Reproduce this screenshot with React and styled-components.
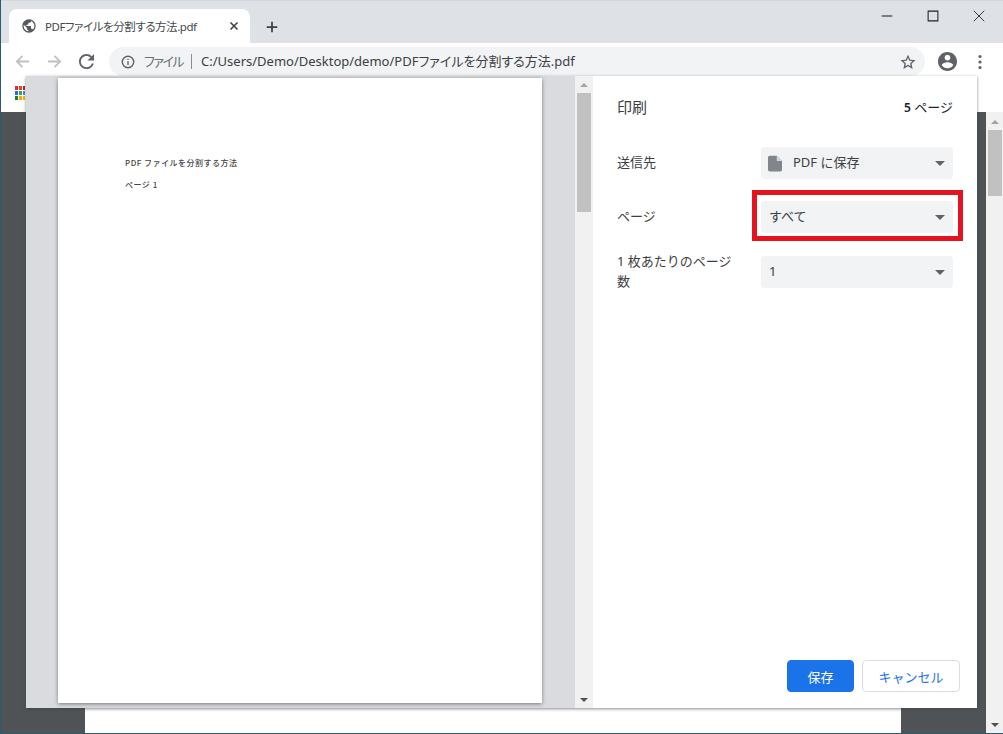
import React from 'react';
import styled, { createGlobalStyle } from 'styled-components';

const Global = createGlobalStyle`
html, body { margin: 0; padding: 0; height: 100%; overflow: hidden; }
body { font-family: "Noto Sans", "Noto Sans CJK JP", sans-serif; background: #fff; }
`;

const Win = styled.div`
position: relative;
width: 1003px;
height: 734px;
box-sizing: border-box;
border-left: 1px solid #2c5a6e;
border-bottom: 1px solid #2c5a6e;
display: flex;
flex-direction: column;
overflow: hidden;
`;

const TabStrip = styled.div`
height: 43px;
flex: none;
box-sizing: border-box;
background: #dee1e6;
border-top: 1px solid #d3d6da;
display: flex;
align-items: flex-end;
padding-left: 8px;
`;

const Tab = styled.div`
width: 241px;
height: 34px;
background: #fff;
border-radius: 8px 8px 0 0;
display: flex;
align-items: center;
padding-left: 12px;
box-sizing: border-box;
`;

const TabTitle = styled.span`
font-size: 11.5px;
font-feature-settings: "palt";
letter-spacing: -0.45px;
color: #45484c;
margin-left: 8px;
width: 182px;
white-space: nowrap;
padding-bottom: 1px;
`;

const NewTab = styled.div`
margin: 0 0 9px 15px;
display: flex;
`;

const WinButtons = styled.div`
margin-left: auto;
margin-right: 1px;
align-self: flex-start;
display: flex;
`;

const WinButton = styled.div`
width: 46px;
height: 30px;
display: flex;
align-items: center;
justify-content: center;
`;

const Toolbar = styled.div`
height: 33px;
flex: none;
background: #fff;
display: flex;
align-items: center;
padding: 4px 0 0 12px;
box-sizing: border-box;
`;

const NavIcon = styled.div`
width: 32px;
display: flex;
padding-left: 2px;
box-sizing: border-box;
`;

const AddressBar = styled.div`
width: 816px;
height: 29px;
background: #f1f3f4;
border-radius: 15px;
display: flex;
align-items: center;
padding: 0 9px 0 12px;
box-sizing: border-box;
font-size: 13px;
color: #3c4043;
`;

const Secure = styled.span`
color: #6c6f73;
margin-left: 9px;
font-size: 13px;
font-feature-settings: "palt";
letter-spacing: -1.5px;
padding-bottom: 2px;
`;

const Divider = styled.span`
width: 1px;
height: 15px;
background: #8a8d91;
margin: 0 9px 0 8px;
`;

const Url = styled.span`
font-size: 13px;
font-feature-settings: "palt";
white-space: nowrap;
flex: 1;
padding-bottom: 2px;
`;

const ToolIcons = styled.div`
display: flex;
align-items: center;
margin-left: 13px;
gap: 21px;
`;

const BookmarkBar = styled.div`
height: 36px;
flex: none;
background: #fff;
padding: 10px 0 0 14px;
box-sizing: border-box;
`;

const Content = styled.div`
flex: 1;
background: #505356;
display: flex;
padding-left: 84px;
`;

const BackPage = styled.div`
width: 816px;
background: #fff;
`;

const BackScroll = styled.div`
width: 17px;
margin-left: auto;
background: #f1f1f1;
display: flex;
flex-direction: column;
align-items: center;
padding-top: 1px;
box-sizing: border-box;
`;

const Dialog = styled.div`
position: absolute;
left: 25px;
top: 76px;
width: 951px;
height: 632px;
display: flex;
background: #fff;
box-shadow: 0 1px 3px rgba(60, 64, 67, 0.6);
`;

const Preview = styled.div`
width: 549px;
flex: none;
background: #dadbdf;
padding: 2px 0 0 32px;
box-sizing: border-box;
`;

const Sheet = styled.div`
width: 484px;
height: 625px;
background: #fff;
box-shadow: 0 1px 4px rgba(0, 0, 0, 0.45);
padding: 79px 0 0 67px;
box-sizing: border-box;
font-family: "Noto Sans CJK JP", sans-serif;
`;

const SheetLine = styled.div`
font-size: 8px;
font-weight: 500;
line-height: 12px;
color: #444;
margin-bottom: 10px;
letter-spacing: 0.5px;
white-space: nowrap;
`;

const Bar = styled.div`
width: 18px;
flex: none;
background: #f1f1f1;
display: flex;
flex-direction: column;
align-items: center;
`;

const Thumb = styled.div`
width: 14px;
height: ${p => p.$h}px;
background: #c1c1c1;
margin-top: 6px;
`;

const ArrowUp = styled.div`
margin-top: 7px;
width: 0;
height: 0;
border-left: 4px solid transparent;
border-right: 4px solid transparent;
border-bottom: 4px solid #a3a3a3;
`;

const ArrowDown = styled.div`
margin: auto 0 6px;
width: 0;
height: 0;
border-left: 4px solid transparent;
border-right: 4px solid transparent;
border-top: 4px solid #505050;
`;

const Side = styled.div`
flex: 1;
display: flex;
flex-direction: column;
padding: 19px 17px 16px 24px;
box-sizing: border-box;
color: #3c4043;
`;

const Head = styled.div`
display: flex;
justify-content: space-between;
align-items: center;
height: 22px;
padding-right: 7px;
margin-bottom: 30px;
`;

const Title = styled.div`
font-size: 15px;
color: #3c4043;
`;

const Count = styled.div`
font-size: 13px;
color: #202124;
`;

const CountNum = styled.span`
font-size: 12px;
font-weight: 600;
`;

const Row = styled.div`
display: grid;
grid-template-columns: 144px 192px;
align-items: center;
margin-bottom: ${p => p.$gap}px;
`;

const Label = styled.div`
font-size: 13px;
line-height: 20px;
padding-bottom: 2px;
color: #3c4043;
width: 120px;
`;

const Select = styled.div`
position: relative;
height: 32px;
background: #f1f3f4;
border-radius: 4px;
display: flex;
align-items: center;
padding: 0 9px 0 8px;
font-size: 13px;
color: #3c4043;
`;

const SelectText = styled.span`
padding-bottom: 3px;
`;

const DocIcon = styled.svg`
margin: 0 11px 0 -1px;
flex: none;
`;

const Caret = styled.div`
margin-left: auto;
width: 0;
height: 0;
border-left: 5px solid transparent;
border-right: 5px solid transparent;
border-top: 5px solid #5f6368;
margin-right: -1px;
`;

const Mark = styled.div`
position: absolute;
left: -9px;
top: -11px;
width: 211px;
height: 51px;
box-sizing: border-box;
border: 5px solid #e3141f;
`;

const Actions = styled.div`
margin-top: auto;
display: flex;
justify-content: flex-end;
gap: 8px;
`;

const Button = styled.div`
height: 32px;
box-sizing: border-box;
border-radius: 4px;
display: flex;
align-items: center;
justify-content: center;
font-size: 13px;
width: ${p => p.$w}px;
background: ${p => (p.$primary ? '#1a73e8' : '#fff')};
color: ${p => (p.$primary ? '#fff' : '#1a73e8')};
border: 1px solid ${p => (p.$primary ? '#1a73e8' : '#dadce0')};
`;

const Stroke = ({ d, color = '#5f6368', width = 2, size = 16 }) => (
    <svg width={size} height={size} viewBox="0 0 16 16" fill="none" stroke={color} strokeWidth={width}>
        <path d={d} />
    </svg>
);

const Apps = () => {
    const colors = ['#d93025', '#ea4335', '#c5221f', '#1a73e8', '#34a853', '#4285f4', '#188038', '#f9ab00', '#fbbc04'];
    return (
        <svg width="10" height="14" viewBox="0 0 10 14" style={{ display: 'block' }}>
            {colors.map((c, i) => (
                <rect key={i} x={(i % 3) * 4} y={Math.floor(i / 3) * 5} width="3" height="4" fill={c} />
            ))}
        </svg>
    );
};

const App = () => (
    <>
        <Global />
        <Win>
            <TabStrip>
                <Tab>
                    <svg width="16" height="16" viewBox="0 0 24 24" fill="#55585c">
                        <path d="M12 2C6.48 2 2 6.48 2 12s4.48 10 10 10 10-4.48 10-10S17.52 2 12 2zm-1 17.93c-3.95-.49-7-3.85-7-7.93 0-.62.08-1.21.21-1.79L9 15v1c0 1.1.9 2 2 2v1.93zm6.9-2.54c-.26-.81-1-1.39-1.9-1.39h-1v-3c0-.55-.45-1-1-1H8v-2h2c.55 0 1-.45 1-1V7h2c1.1 0 2-.9 2-2v-.41c2.93 1.19 5 4.06 5 7.41 0 2.08-.8 3.97-2.1 5.39z" />
                    </svg>
                    <TabTitle>PDFファイルを分割する方法.pdf</TabTitle>
                    <Stroke size={14} color="#45484c" width={2} d="M4 4l8 8M12 4l-8 8" />
                </Tab>
                <NewTab>
                    <Stroke size={14} color="#3c4043" width={2} d="M8 2v12M2 8h12" />
                </NewTab>
                <WinButtons>
                    <WinButton><Stroke size={12} color="#222" width={1.4} d="M1 8h14" /></WinButton>
                    <WinButton><Stroke size={12} color="#222" width={1.4} d="M1.5 1.5h13v13h-13z" /></WinButton>
                    <WinButton><Stroke size={14} color="#222" width={1} d="M2 2l12 12M14 2L2 14" /></WinButton>
                </WinButtons>
            </TabStrip>
            <Toolbar>
                <NavIcon><Stroke size={15} color="#c0c2c5" d="M15 8H2M8 2L2 8l6 6" /></NavIcon>
                <NavIcon><Stroke size={15} color="#c0c2c5" d="M1 8h13M8 2l6 6-6 6" /></NavIcon>
                <NavIcon>
                    <svg width="15" height="15" viewBox="4 4 16 16" fill="#5f6368">
                        <path d="M17.65 6.35A7.958 7.958 0 0 0 12 4c-4.42 0-7.99 3.58-7.99 8s3.57 8 7.99 8c3.73 0 6.84-2.55 7.73-6h-2.08A5.99 5.99 0 0 1 12 18c-3.31 0-6-2.69-6-6s2.69-6 6-6c1.66 0 3.14.69 4.22 1.78L13 11h7V4l-2.35 2.35z" />
                    </svg>
                </NavIcon>
                <AddressBar>
                    <svg width="14" height="14" viewBox="0 0 16 16" fill="none" stroke="#5f6368" strokeWidth="1.6">
                        <circle cx="8" cy="8" r="6.5" />
                        <path d="M8 7v4.5M8 4.2v1.6" />
                    </svg>
                    <Secure>ファイル</Secure>
                    <Divider />
                    <Url>C:/Users/Demo/Desktop/demo/PDFファイルを分割する方法.pdf</Url>
                    <svg width="16" height="16" viewBox="0 0 24 24" fill="none" stroke="#5f6368" strokeWidth="2">
                        <path d="M12 3.5l2.6 5.8 6.3.7-4.7 4.2 1.3 6.2L12 17.2l-5.5 3.2 1.3-6.2L3.1 10l6.3-.7z" />
                    </svg>
                </AddressBar>
                <ToolIcons>
                    <svg width="19" height="19" viewBox="2 2 20 20" fill="#5f6368">
                        <path d="M12 2C6.48 2 2 6.48 2 12s4.48 10 10 10 10-4.48 10-10S17.52 2 12 2zm0 3c1.66 0 3 1.34 3 3s-1.34 3-3 3-3-1.34-3-3 1.34-3 3-3zm0 14.2c-2.5 0-4.71-1.28-6-3.22.03-1.99 4-3.08 6-3.08 1.99 0 5.97 1.09 6 3.08-1.29 1.94-3.5 3.22-6 3.22z" />
                    </svg>
                    <svg width="4" height="16" viewBox="0 0 4 16" fill="#5f6368">
                        <circle cx="2" cy="2.5" r="1.6" />
                        <circle cx="2" cy="8" r="1.6" />
                        <circle cx="2" cy="13.5" r="1.6" />
                    </svg>
                </ToolIcons>
            </Toolbar>
            <BookmarkBar><Apps /></BookmarkBar>
            <Content>
                <BackPage />
                <BackScroll>
                    <ArrowUp />
                    <Thumb $h={66} />
                    <ArrowDown />
                </BackScroll>
            </Content>
            <Dialog>
                <Preview>
                    <Sheet>
                        <SheetLine>PDF ファイルを分割する方法</SheetLine>
                        <SheetLine>ページ 1</SheetLine>
                    </Sheet>
                </Preview>
                <Bar>
                    <ArrowUp />
                    <Thumb $h={119} />
                    <ArrowDown />
                </Bar>
                <Side>
                    <Head>
                        <Title>印刷</Title>
                        <Count><CountNum>5</CountNum> ページ</Count>
                    </Head>
                    <Row $gap={22}>
                        <Label>送信先</Label>
                        <Select>
                            <DocIcon width="14" height="17" viewBox="0 0 16 18" fill="#80868b">
                                <path d="M2 0h8l6 6v10.5a1.5 1.5 0 0 1-1.5 1.5h-12.5A2 2 0 0 1 0 16V2a2 2 0 0 1 2-2z" />
                                <path d="M10 0v6h6z" fill="#d5d7da" />
                            </DocIcon>
                            <SelectText>PDF に保存</SelectText>
                            <Caret />
                        </Select>
                    </Row>
                    <Row $gap={18}>
                        <Label>ページ</Label>
                        <Select>
                            <SelectText>すべて</SelectText>
                            <Caret />
                            <Mark />
                        </Select>
                    </Row>
                    <Row $gap={0}>
                        <Label>1 枚あたりのページ数</Label>
                        <Select>
                            <SelectText>1</SelectText>
                            <Caret />
                        </Select>
                    </Row>
                    <Actions>
                        <Button $primary $w={67}>保存</Button>
                        <Button $w={98}>キャンセル</Button>
                    </Actions>
                </Side>
            </Dialog>
        </Win>
    </>
);

export default App;
